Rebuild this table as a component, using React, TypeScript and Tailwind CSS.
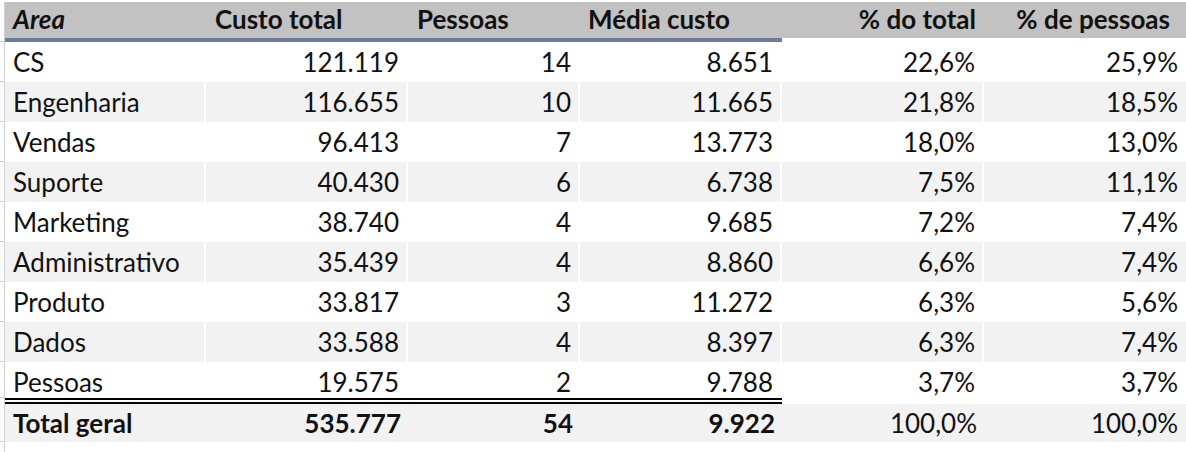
import React from "react";

type Row = { area: string; custo: string; pessoas: string; media: string; pct: string; pctp: string };

const rows: Row[] = [
  { area: "CS", custo: "121.119", pessoas: "14", media: "8.651", pct: "22,6%", pctp: "25,9%" },
  { area: "Engenharia", custo: "116.655", pessoas: "10", media: "11.665", pct: "21,8%", pctp: "18,5%" },
  { area: "Vendas", custo: "96.413", pessoas: "7", media: "13.773", pct: "18,0%", pctp: "13,0%" },
  { area: "Suporte", custo: "40.430", pessoas: "6", media: "6.738", pct: "7,5%", pctp: "11,1%" },
  { area: "Marketing", custo: "38.740", pessoas: "4", media: "9.685", pct: "7,2%", pctp: "7,4%" },
  { area: "Administrativo", custo: "35.439", pessoas: "4", media: "8.860", pct: "6,6%", pctp: "7,4%" },
  { area: "Produto", custo: "33.817", pessoas: "3", media: "11.272", pct: "6,3%", pctp: "5,6%" },
  { area: "Dados", custo: "33.588", pessoas: "4", media: "8.397", pct: "6,3%", pctp: "7,4%" },
  { area: "Pessoas", custo: "19.575", pessoas: "2", media: "9.788", pct: "3,7%", pctp: "3,7%" },
];

function Strip({ last }: { last?: boolean }) {
  return (
    <div className={"w-[5px] shrink-0 self-stretch border-r border-[#cfcfcf] " + (last ? "" : "border-b border-b-[#cfcfcf]")} />
  );
}

export default function App() {
  return (
    <div
      className="w-[1186px] h-[452px] bg-white overflow-hidden text-[26px] leading-none text-[#111]"
      style={{ fontFamily: "Lato, 'Open Sans', sans-serif" }}
    >
      {/* header */}
      <div className="flex h-[42px] pt-[2px]">
        <Strip />
        <div className="flex flex-1 flex-col">
          <div className="flex h-[36px] bg-[#c2c2c2] font-bold items-center pb-[2px]">
            <div className="w-[201px] pl-[8px] italic">Area</div>
            <div className="w-[202px] pl-[9px]">Custo total</div>
            <div className="w-[172px] pl-[9px]">Pessoas</div>
            <div className="w-[202px] pl-[8px]">Média custo</div>
            <div className="w-[202px] text-right pr-[8px]">% do total</div>
            <div className="w-[202px] text-right pr-[16px]">% de pessoas</div>
          </div>
          <div className="flex h-[4px]">
            <div className="w-[777px] bg-[#6b7ca3]" />
          </div>
        </div>
      </div>
      {rows.map((r, i) => {
        const last = i === rows.length - 1;
        return (
          <div key={r.area} className={"flex " + (last ? "h-[36px]" : "h-[40px]")}>
            <Strip />
            <div className={"flex flex-1 items-center " + (last ? "pt-[4px] " : "") + (i % 2 === 1 ? "bg-[#f2f2f2]" : "bg-white")}>
              <div className="w-[201px] h-full flex items-center pl-[8px] border-r-2 border-white">{r.area}</div>
              <div className="w-[202px] h-full flex items-center justify-end pr-[7px] border-r-2 border-white">{r.custo}</div>
              <div className="w-[172px] h-full flex items-center justify-end pr-[7px] border-r-2 border-white">{r.pessoas}</div>
              <div className="w-[202px] h-full flex items-center justify-end pr-[7px] border-r-2 border-white">{r.media}</div>
              <div className="w-[202px] h-full flex items-center justify-end pr-[7px] border-r-2 border-white">{r.pct}</div>
              <div className="w-[202px] h-full flex items-center justify-end pr-[8px]">{r.pctp}</div>
            </div>
          </div>
        );
      })}
      {/* total */}
      <div className="flex h-[44px]">
        <Strip />
        <div className="flex flex-1 flex-col">
          <div className="flex h-[6px]">
            <div className="w-[777px] border-t-[6px] border-double border-black" />
          </div>
          <div className="flex h-[38px] bg-[#f2f2f2] items-center">
            <div className="w-[201px] pl-[8px] font-bold">Total geral</div>
            <div className="w-[202px] text-right pr-[7px] font-bold">535.777</div>
            <div className="w-[172px] text-right pr-[7px] font-bold">54</div>
            <div className="w-[202px] text-right pr-[7px] font-bold">9.922</div>
            <div className="w-[202px] text-right pr-[7px]">100,0%</div>
            <div className="w-[202px] text-right pr-[8px]">100,0%</div>
          </div>
        </div>
      </div>
      <div className="flex h-[10px]">
        <Strip last />
      </div>
    </div>
  );
}
